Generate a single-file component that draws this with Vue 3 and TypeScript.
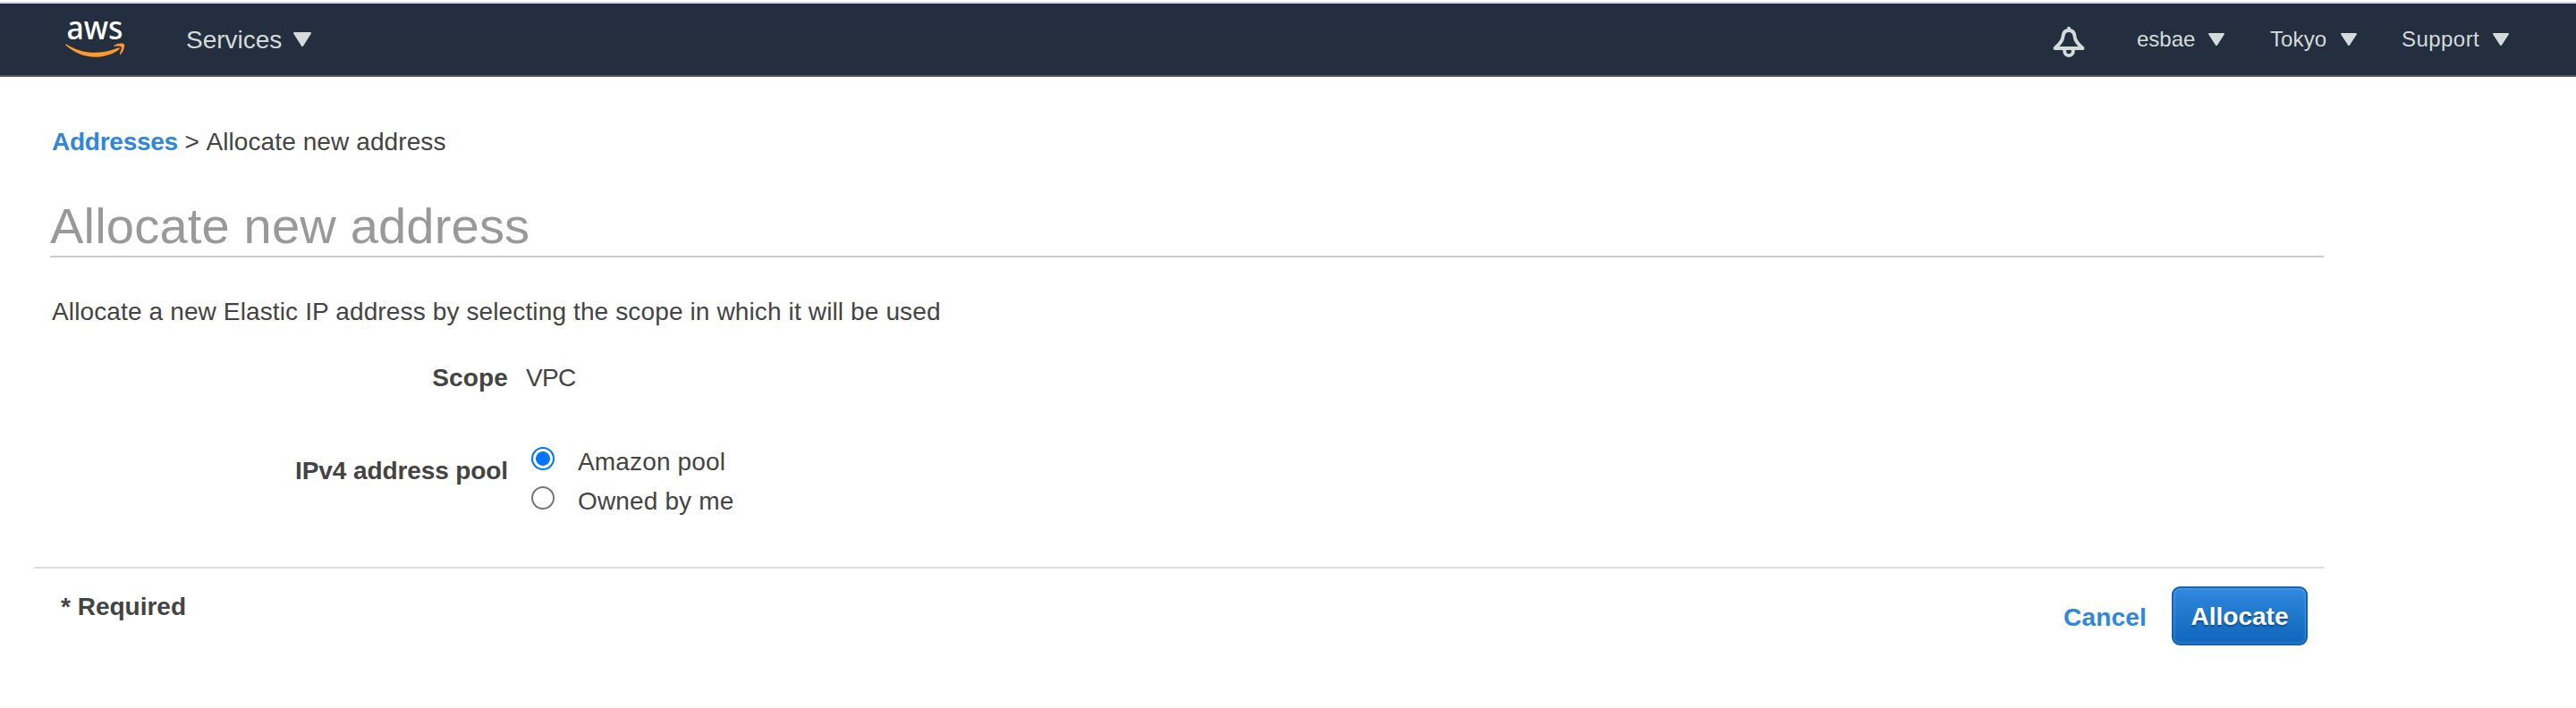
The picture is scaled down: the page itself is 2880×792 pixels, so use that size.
<script setup lang="ts">
import { ref } from 'vue'

interface MenuItem { label: string; cls: string }
interface PoolOption { value: string; label: string }

const menus: MenuItem[] = [
  { label: 'esbae', cls: 'user' },
  { label: 'Tokyo', cls: 'region' },
  { label: 'Support', cls: 'support' },
]
const pools: PoolOption[] = [
  { value: 'amazon', label: 'Amazon pool' },
  { value: 'owned', label: 'Owned by me' },
]
const pool = ref('amazon')
</script>

<template>
  <div class="page">
    <header class="nav">
      <svg class="logo" width="68" height="44" viewBox="0 0 68 44">
        <text class="logo-text" x="1.5" y="23" textLength="63" lengthAdjust="spacingAndGlyphs">aws</text>
        <g fill="#ff9928" transform="translate(0 .8)">
          <path d="M1.200 27.600C10 33.300 21 37 33 37c8.400 0 18-1.900 26-5.400 1.300-.6 2.500.8 1.200 1.800C53 38.900 43 42 33.500 42 21 42 9.500 36.900 .6 29c-.8-.8 0-1.900.6-1.400z" />
          <path d="M54.500 29.200c3.200-2.400 10.300-3.100 11.300-1.600 1 1.500-.4 8.300-4 11.300-.6.5-1.300.2-1-.5 1-2.300 2.500-6.800 1.700-7.800-.9-1.100-5.200-.8-7.600-.5-.7.1-1-.5-.4-.9z" />
        </g>
      </svg>
      <a class="services">Services
        <svg class="caret-lg" width="20" height="17" viewBox="0 0 20 17"><path d="M1.200 0h17.600c1.200 0 1.500.9.900 1.800L11 15.600c-.6.9-1.400.9-2 0L.3 1.800C-.3.9 0 0 1.200 0z" /></svg>
      </a>
      <svg class="bell" width="36" height="36" viewBox="0 0 36 36">
        <path d="M2.500 26C7 21.500 10.800 19 11.300 13.500c.3-4.500 2.400-7.500 6.700-7.500s6.400 3 6.700 7.500c.5 5.500 4.300 8 8.800 12.500z" />
        <path d="M18 6V3.800M13.200 27v2.300a4.800 4.800 0 0 0 9.600 0V27" />
      </svg>
      <a v-for="m in menus" :key="m.label" class="menu" :class="m.cls"><span>{{ m.label }}</span>
        <svg class="caret" width="18" height="15" viewBox="0 0 18 15"><path d="M1.200 0h15.600c1.200 0 1.400.9.800 1.700L10 13.500c-.6.8-1.400.8-2 0L.4 1.700C-.2.900 0 0 1.200 0z" /></svg>
      </a>
    </header>
    <main class="content">
      <nav class="crumbs"><a>Addresses</a><span class="sep">&gt;</span><span>Allocate new address</span></nav>
      <h1>Allocate new address</h1>
      <p class="desc">Allocate a new Elastic IP address by selecting the scope in which it will be used</p>
      <div class="row scope">
        <span class="label">Scope</span>
        <span class="value">VPC</span>
      </div>
      <div class="row pool">
        <span class="label">IPv4 address pool</span>
        <div class="options">
          <label v-for="p in pools" :key="p.value">
            <input v-model="pool" type="radio" name="pool" :value="p.value"><span>{{ p.label }}</span>
          </label>
        </div>
      </div>
    </main>
    <footer class="foot">
      <span class="required">* Required</span>
      <a class="cancel">Cancel</a>
      <button type="button">Allocate</button>
    </footer>
  </div>
</template>

<style>
body { margin: 0; background: #fff; }
</style>

<style scoped>
.page { width: 2880px; height: 792px; box-sizing: border-box; padding-top: 2px; background: #fff; color: #444; font: 28px/32px "Liberation Sans", Arial, sans-serif; }
.nav { height: 84px; box-sizing: border-box; display: flex; border-top: 2px solid #d5d9de; border-bottom: 2px solid #545b64; background: #232f3e; color: #d5dbdb; }
.nav svg { flex: none; display: block; overflow: visible; }
.logo { margin: 17px 0 0 73px; }
.logo-text { font: 500 37px "Noto Sans", sans-serif; fill: #fff; }
.services { display: flex; margin: 25px 0 0 67px; height: 32px; line-height: 32px; white-space: nowrap; }
.caret-lg { margin: 7px 0 0 13px; fill: #d5dbdb; }
.bell { margin: 24px 0 0 auto; fill: none; stroke: #d5dbdb; stroke-width: 3.900; stroke-linejoin: round; stroke-linecap: round; }
.menu { display: flex; height: 32px; margin-top: 24px; font-size: 24px; line-height: 32px; }
.caret { margin: 9px 0 0; fill: #d5dbdb; }
.menu span { box-sizing: border-box; white-space: nowrap; }
.user { margin-left: 58px; }
.user span { width: 80px; }
.region { margin-left: 50px; }
.region span { width: 80px; padding-left: 1px; letter-spacing: .1px; }
.support { margin: 24px 75px 0 49px; }
.support span { width: 103px; padding-left: 1px; letter-spacing: .45px; }
.content { box-sizing: border-box; width: 2598px; height: 548px; padding: 57px 0 0 58px; }
.crumbs { height: 32px; letter-spacing: .1px; display: flex; white-space: pre; }
.crumbs a { color: #2e87dc; font-weight: 700; letter-spacing: -.25px; }
.sep { margin: 0 7.500px; }
h1 { margin: 43px 0 0 -2px; height: 70px; box-sizing: border-box; border-bottom: 2px solid #ccc; color: #999; font-size: 56px; font-weight: 400; line-height: 64px; letter-spacing: .2px; padding-top: 3px; }
.desc { margin: 45px 0 0; height: 32px; letter-spacing: .13px; }
.row { display: flex; }
.label { width: 510px; text-align: right; font-weight: 700; }
.scope { margin-top: 42px; }
.scope .label { letter-spacing: .15px; }
.value { margin-left: 20px; letter-spacing: -.7px; }
.pool { margin-top: 62px; }
.pool .label { margin-top: 10px; letter-spacing: -.1px; }
.options { margin-left: 26px; }
label { display: flex; height: 44px; letter-spacing: .15px; }
input { width: 26px; height: 26px; margin: -1px 26px 0 0; appearance: none; border: 2px solid #767676; border-radius: 50%; background: #fff; box-sizing: border-box; }
input:checked { border-color: #0075ff; background: radial-gradient(circle, #0075ff 0 7.500px, #fff 8.300px); }
.foot { display: flex; box-sizing: border-box; width: 2560px; margin-left: 38px; border-top: 2px solid #ddd; font-weight: 700; }
.required { margin: 27px 0 0 30px; }
.cancel { margin: 39px 28px 0 auto; color: #2e87dc; letter-spacing: .2px; }
button { width: 152px; height: 66px; margin: 20px 18px 0 0; padding: 2px 0 0; box-sizing: border-box; border: 2px solid #0e63ba; border-radius: 9px; background: linear-gradient(#3089de, #0e65b9); box-shadow: inset 0 0 3px 1px rgba(255,255,255,.2); color: #fff; font: 700 28px/60px "Liberation Sans", Arial, sans-serif; text-shadow: 0 2px 2px rgba(0,30,90,.45); }
</style>
